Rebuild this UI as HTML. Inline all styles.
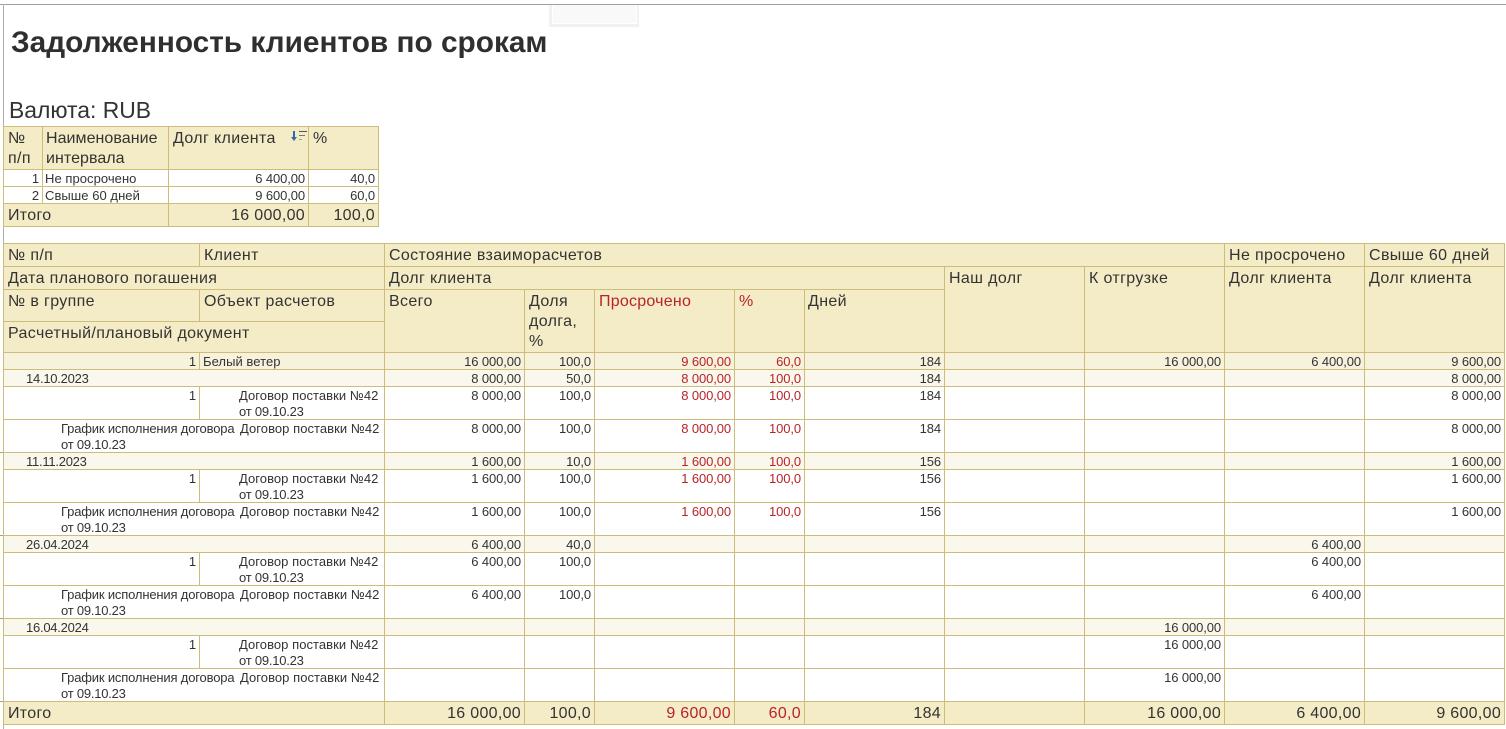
<!DOCTYPE html>
<html lang="ru"><head><meta charset="utf-8"><title>Задолженность клиентов по срокам</title>
<style>
html,body{margin:0;padding:0;background:#fff;width:1506px;height:729px;overflow:hidden}
body{position:relative;font-family:"Liberation Sans",Arial,sans-serif;color:#333}
.abs{position:absolute}
table{position:absolute;border-collapse:collapse;table-layout:fixed;border-spacing:0}
td{border:1px solid #cdbd78;padding:0 3px 0 4px;vertical-align:top;white-space:nowrap;overflow:hidden;box-sizing:border-box}
.h td,td.h{background:#f4ecc6;font-size:16px;line-height:20px;padding-top:2px;letter-spacing:.36px}
.d td{font-size:13px;line-height:16px;letter-spacing:.05px;padding-top:1px}
.d td::after{content:"";display:block;margin-top:-1px}
.d td.r{letter-spacing:-.1px}
.r{text-align:right}
.c{color:#b8232a}
.g1 td{background:#f7f2dc}
.g2 td{background:#faf8ec}
.w td{background:#fff}
.t td{background:#f4ecc6;font-size:16px;line-height:20px;padding-top:2px;letter-spacing:.3px}
.d td.i1{padding-left:22px;letter-spacing:-.25px}
.d td.i2{padding-left:39px}
.d td.i3{padding-left:57px}
.s{letter-spacing:-.22px}
.g{display:inline-block;width:179px;letter-spacing:-.17px}
</style></head><body>
<div class="abs" style="left:0;top:4px;width:1506px;height:1px;background:#a0a0a0"></div>
<div class="abs" style="left:3px;top:4px;width:1px;height:725px;background:#b0b0b0"></div>
<div class="abs" style="left:0;top:452px;width:3px;height:1px;background:#a0a0a0"></div>
<div class="abs" style="left:0;top:535px;width:3px;height:1px;background:#a0a0a0"></div>
<div class="abs" style="left:0;top:618px;width:3px;height:1px;background:#a0a0a0"></div>
<div class="abs" style="left:0;top:701px;width:3px;height:1px;background:#a0a0a0"></div>
<div class="abs" style="left:549px;top:5px;width:90px;height:22px;background:#f1f1f1"></div>
<div class="abs" style="left:552px;top:5px;width:83px;height:18px;background:#f9f9f9;border:solid #fff;border-width:0 1px 1px"></div>
<div class="abs" style="left:11px;top:25px;font-size:29.8px;line-height:36px;font-weight:bold;color:#2f2f2f;white-space:nowrap">Задолженность клиентов по срокам</div>
<div class="abs" style="left:9px;top:97px;font-size:22.9px;line-height:26px;white-space:nowrap">Валюта: RUB</div>

<table style="left:3px;top:126px;width:375px">
<colgroup><col style="width:39px"><col style="width:126px"><col style="width:140px"><col style="width:70px"></colgroup>
<tr class="h" style="height:43px"><td>№<br>п/п</td><td style="padding-left:3px;letter-spacing:.05px">Наименование<br>интервала</td><td>Долг клиента</td><td>%</td></tr>
<tr class="d w" style="height:17px"><td class="r">1</td><td style="padding-left:2px">Не просрочено</td><td class="r">6 400,00</td><td class="r">40,0</td></tr>
<tr class="d w" style="height:17px"><td class="r">2</td><td style="padding-left:2px">Свыше 60 дней</td><td class="r">9 600,00</td><td class="r">60,0</td></tr>
<tr class="t" style="height:23px"><td colspan="2">Итого</td><td class="r">16 000,00</td><td class="r">100,0</td></tr>
</table>
<svg class="abs" style="left:290px;top:130px" width="18" height="12" viewBox="0 0 18 12"><path d="M4 1v7" stroke="#2f6aa8" stroke-width="2" fill="none"/><path d="M1 7h6L4 11z" fill="#2f6aa8"/><path d="M9 1.5h8" stroke="#555" stroke-width="1"/><path d="M9 5.5h6" stroke="#777" stroke-width="1"/><path d="M9 9.5h3" stroke="#a5a58a" stroke-width="1"/></svg>

<table style="left:3px;top:243px;width:1501px">
<colgroup><col style="width:196px"><col style="width:185px"><col style="width:140px"><col style="width:70px"><col style="width:140px"><col style="width:70px"><col style="width:140px"><col style="width:140px"><col style="width:140px"><col style="width:140px"><col style="width:140px"></colgroup>
<tr class="h" style="height:23px"><td>№ п/п</td><td>Клиент</td><td colspan="7">Состояние взаиморасчетов</td><td>Не просрочено</td><td>Свыше 60 дней</td></tr>
<tr class="h" style="height:23px"><td colspan="2">Дата планового погашения</td><td colspan="5">Долг клиента</td><td rowspan="3">Наш долг</td><td rowspan="3">К отгрузке</td><td rowspan="3">Долг клиента</td><td rowspan="3">Долг клиента</td></tr>
<tr class="h" style="height:32px"><td>№ в группе</td><td>Объект расчетов</td><td rowspan="2">Всего</td><td rowspan="2">Доля<br>долга,<br>%</td><td rowspan="2" class="c" style="letter-spacing:.24px">Просрочено</td><td rowspan="2" class="c">%</td><td rowspan="2" style="padding-left:3px">Дней</td></tr>
<tr class="h" style="height:31px"><td colspan="2">Расчетный/плановый документ</td></tr>

<tr class="d g1" style="height:17px"><td class="r">1</td><td style="padding-left:3px">Белый ветер</td><td class="r">16 000,00</td><td class="r">100,0</td><td class="r c">9 600,00</td><td class="r c">60,0</td><td class="r">184</td><td></td><td class="r">16 000,00</td><td class="r">6 400,00</td><td class="r">9 600,00</td></tr>

<tr class="d g2" style="height:17px"><td colspan="2" class="i1">14.10.2023</td><td class="r">8 000,00</td><td class="r">50,0</td><td class="r c">8 000,00</td><td class="r c">100,0</td><td class="r">184</td><td></td><td></td><td></td><td class="r">8 000,00</td></tr>
<tr class="d w" style="height:33px"><td class="r">1</td><td class="i2">Договор поставки №42<br><span class="s">от 09.10.23</span></td><td class="r">8 000,00</td><td class="r">100,0</td><td class="r c">8 000,00</td><td class="r c">100,0</td><td class="r">184</td><td></td><td></td><td></td><td class="r">8 000,00</td></tr>
<tr class="d w" style="height:33px"><td colspan="2" class="i3"><span class="g">График исполнения договора</span>Договор поставки №42<br><span class="s">от 09.10.23</span></td><td class="r">8 000,00</td><td class="r">100,0</td><td class="r c">8 000,00</td><td class="r c">100,0</td><td class="r">184</td><td></td><td></td><td></td><td class="r">8 000,00</td></tr>

<tr class="d g2" style="height:17px"><td colspan="2" class="i1">11.11.2023</td><td class="r">1 600,00</td><td class="r">10,0</td><td class="r c">1 600,00</td><td class="r c">100,0</td><td class="r">156</td><td></td><td></td><td></td><td class="r">1 600,00</td></tr>
<tr class="d w" style="height:33px"><td class="r">1</td><td class="i2">Договор поставки №42<br><span class="s">от 09.10.23</span></td><td class="r">1 600,00</td><td class="r">100,0</td><td class="r c">1 600,00</td><td class="r c">100,0</td><td class="r">156</td><td></td><td></td><td></td><td class="r">1 600,00</td></tr>
<tr class="d w" style="height:33px"><td colspan="2" class="i3"><span class="g">График исполнения договора</span>Договор поставки №42<br><span class="s">от 09.10.23</span></td><td class="r">1 600,00</td><td class="r">100,0</td><td class="r c">1 600,00</td><td class="r c">100,0</td><td class="r">156</td><td></td><td></td><td></td><td class="r">1 600,00</td></tr>

<tr class="d g2" style="height:17px"><td colspan="2" class="i1">26.04.2024</td><td class="r">6 400,00</td><td class="r">40,0</td><td></td><td></td><td></td><td></td><td></td><td class="r">6 400,00</td><td></td></tr>
<tr class="d w" style="height:33px"><td class="r">1</td><td class="i2">Договор поставки №42<br><span class="s">от 09.10.23</span></td><td class="r">6 400,00</td><td class="r">100,0</td><td></td><td></td><td></td><td></td><td></td><td class="r">6 400,00</td><td></td></tr>
<tr class="d w" style="height:33px"><td colspan="2" class="i3"><span class="g">График исполнения договора</span>Договор поставки №42<br><span class="s">от 09.10.23</span></td><td class="r">6 400,00</td><td class="r">100,0</td><td></td><td></td><td></td><td></td><td></td><td class="r">6 400,00</td><td></td></tr>

<tr class="d g2" style="height:17px"><td colspan="2" class="i1">16.04.2024</td><td></td><td></td><td></td><td></td><td></td><td></td><td class="r">16 000,00</td><td></td><td></td></tr>
<tr class="d w" style="height:33px"><td class="r">1</td><td class="i2">Договор поставки №42<br><span class="s">от 09.10.23</span></td><td></td><td></td><td></td><td></td><td></td><td></td><td class="r">16 000,00</td><td></td><td></td></tr>
<tr class="d w" style="height:33px"><td colspan="2" class="i3"><span class="g">График исполнения договора</span>Договор поставки №42<br><span class="s">от 09.10.23</span></td><td></td><td></td><td></td><td></td><td></td><td></td><td class="r">16 000,00</td><td></td><td></td></tr>

<tr class="t" style="height:23px"><td colspan="2">Итого</td><td class="r">16 000,00</td><td class="r">100,0</td><td class="r c">9 600,00</td><td class="r c">60,0</td><td class="r">184</td><td></td><td class="r">16 000,00</td><td class="r">6 400,00</td><td class="r">9 600,00</td></tr>
</table>
</body></html>
